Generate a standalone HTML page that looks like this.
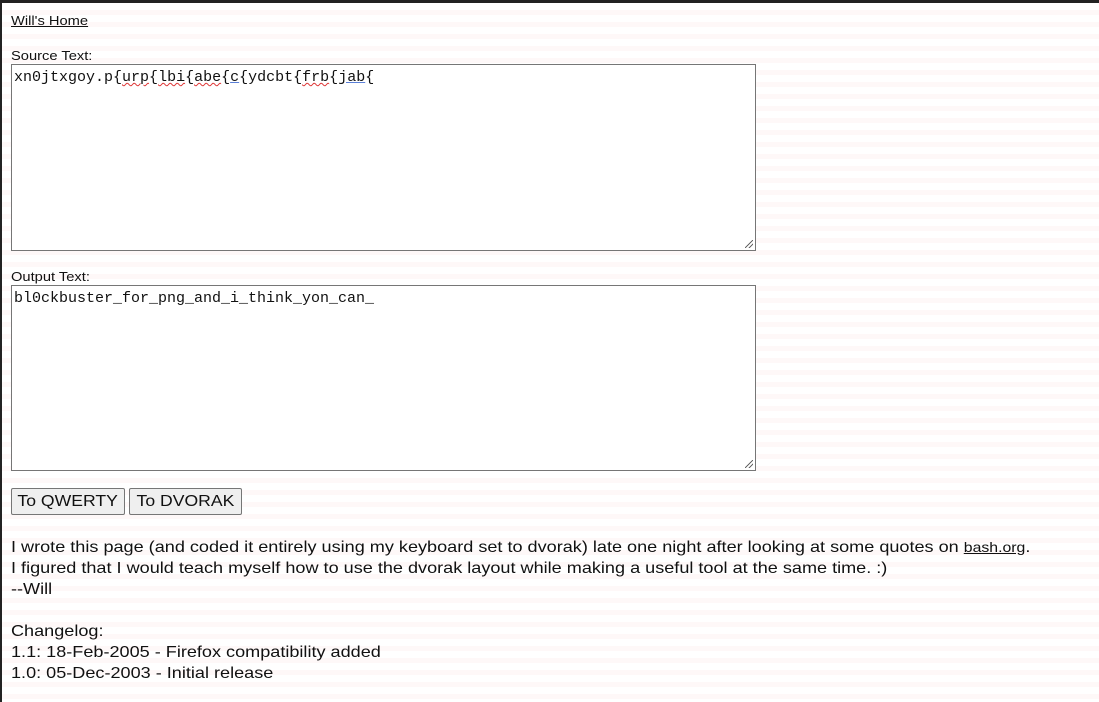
<!DOCTYPE html>
<html><head><style>
html,body{margin:0;padding:0;}
body{width:1099px;height:702px;overflow:hidden;background:#fff;
background-image:repeating-linear-gradient(0deg,rgba(255,255,255,0) 0 3px,rgba(250,215,215,.18) 3px 8px,rgba(255,255,255,0) 8px 12px);
font-family:"Liberation Sans",Arial,sans-serif;color:#111;position:relative;}
.a{position:absolute;transform-origin:0 0;transform:scaleX(1.13);white-space:nowrap;}
a{color:#111;}
.ta{position:absolute;left:11px;width:745px;background:#fff;border:1px solid #767676;box-sizing:border-box;font-family:"Liberation Mono",monospace;font-size:15px;padding:4px 2px;}
.ta .rz{position:absolute;right:2px;bottom:2px;width:8px;height:8px;background:linear-gradient(135deg,transparent 45%,#666 45% 55%,transparent 55% 70%,#666 70% 80%,transparent 80%);}
.sq{text-decoration:underline wavy #d33;text-decoration-thickness:1px;}
.bl{text-decoration:underline #5a7fd6;}
button{position:absolute;top:488px;height:27px;font:16px "Liberation Sans",Arial,sans-serif;background:#efefef;border:1px solid #767676;border-radius:2px;padding:0;color:#111;}
button span{display:inline-block;transform:scaleX(1.1);}
.t{font-size:16px;line-height:21px;}
</style></head><body>
<div style="position:absolute;left:0;top:0;width:1099px;height:3px;background:#222"></div>
<div style="position:absolute;left:0;top:0;width:2px;height:702px;background:#222"></div>
<div class="a" style="left:11px;top:13px;font-size:13px"><a href="#">Will's Home</a></div>
<div class="a" style="left:11px;top:48px;font-size:13px">Source Text:</div>
<div class="ta" style="top:64px;height:187px">xn0jtxgoy.p{<span class="sq">urp</span>{<span class="sq">lbi</span>{<span class="sq">abe</span>{<span class="bl">c</span>{ydcbt{<span class="sq">frb</span>{<span class="bl">jab</span>{<div class="rz"></div></div>
<div class="a" style="left:11px;top:269px;font-size:13px">Output Text:</div>
<div class="ta" style="top:285px;height:186px">bl0ckbuster_for_png_and_i_think_yon_can_<div class="rz"></div></div>
<button style="left:11px;width:114px"><span>To QWERTY</span></button>
<button style="left:129px;width:113px"><span>To DVORAK</span></button>
<div class="a t" style="left:11px;top:537px">I wrote this page (and coded it entirely using my keyboard set to dvorak) late one night after looking at some quotes on <a href="#" style="font-size:14px">bash.org</a>.<br>I figured that I would teach myself how to use the dvorak layout while making a useful tool at the same time. :)<br>--Will<br><br>Changelog:<br>1.1: 18-Feb-2005 - Firefox compatibility added<br>1.0: 05-Dec-2003 - Initial release</div>
</body></html>
